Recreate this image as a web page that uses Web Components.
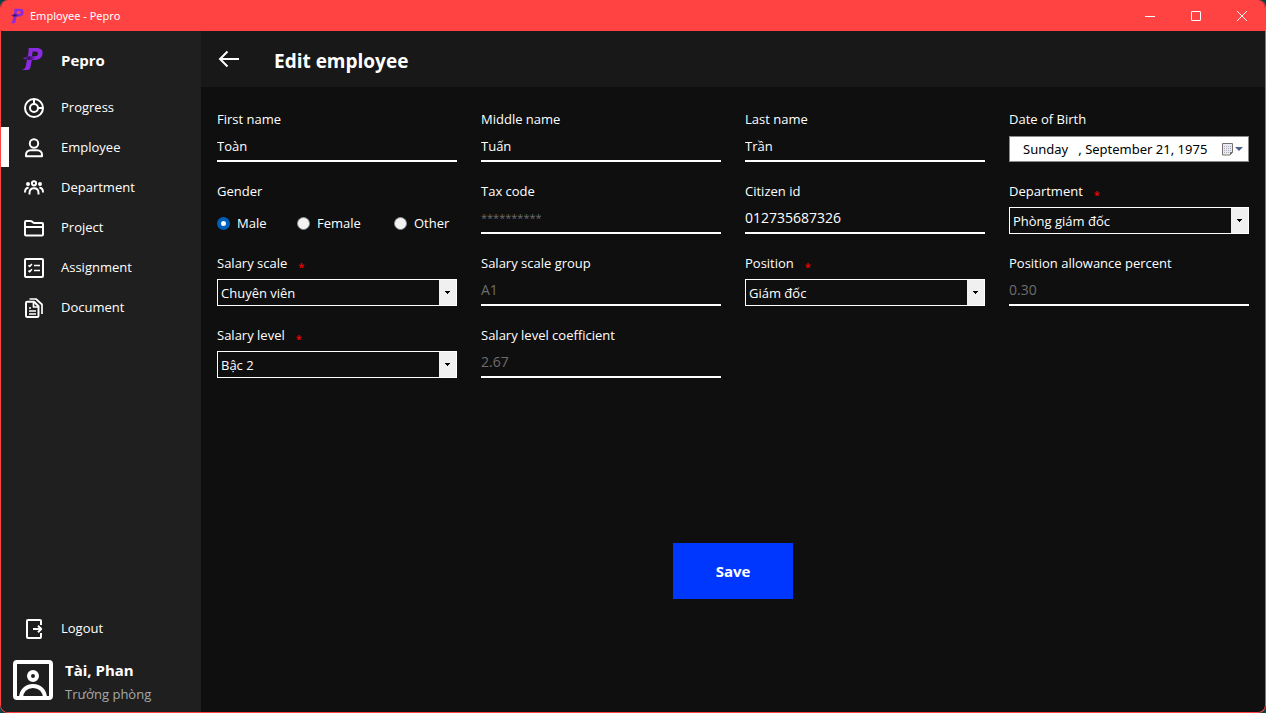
<!DOCTYPE html>
<html lang="en">
<head>
<meta charset="utf-8">
<title>Employee - Pepro</title>
<style>
  html, body { margin: 0; height: 100%; }
  body {
    background: #0b4349;
    color: #fff;
    font: 13px/20px "Open Sans", "Noto Sans", sans-serif;
  }
</style>
</head>
<body>
<app-window caption="Employee - Pepro">
  <side-bar slot="sidebar">
    <nav-item icon="progress">Progress</nav-item>
    <nav-item icon="employee" active>Employee</nav-item>
    <nav-item icon="department">Department</nav-item>
    <nav-item icon="project">Project</nav-item>
    <nav-item icon="assignment">Assignment</nav-item>
    <nav-item icon="document">Document</nav-item>
    <nav-item slot="bottom" icon="logout">Logout</nav-item>
    <user-card slot="bottom" name="Tài, Phan" role-name="Trưởng phòng"></user-card>
  </side-bar>
  <page-header>Edit employee</page-header>
  <employee-form>
    <text-field label="First name" value="Toàn"></text-field>
    <text-field label="Middle name" value="Tuấn"></text-field>
    <text-field label="Last name" value="Trần"></text-field>
    <date-field label="Date of Birth" value="Sunday   , September 21, 1975"></date-field>
    <radio-field label="Gender" options="Male,Female,Other" value="Male"></radio-field>
    <text-field label="Tax code" value="**********" kind="masked" disabled></text-field>
    <text-field label="Citizen id" value="012735687326" kind="number"></text-field>
    <select-field label="Department" value="Phòng giám đốc"></select-field>
    <select-field label="Salary scale" value="Chuyên viên"></select-field>
    <text-field label="Salary scale group" value="A1" kind="number" disabled></text-field>
    <select-field label="Position" value="Giám đốc"></select-field>
    <text-field label="Position allowance percent" value="0.30" kind="number" disabled></text-field>
    <select-field label="Salary level" value="Bậc 2"></select-field>
    <text-field label="Salary level coefficient" value="2.67" kind="number" disabled></text-field>
  </employee-form>
</app-window>

<script>
const ICONS = {
  progress: '<circle cx="12" cy="12" r="9"/><circle cx="12" cy="12" r="4"/><path d="M12 3v5M16 12h5"/>',
  employee: '<circle cx="12" cy="7.5" r="4.2"/><path d="M4 20.2v-1.4c0-2.8 2-4.6 4.6-4.6h6.8c2.6 0 4.6 1.8 4.6 4.6v1.4z"/>',
  department: '<circle cx="12" cy="7.3" r="2.1"/><circle cx="6" cy="8" r="1"/><circle cx="18" cy="8" r="1"/><path d="M7.5 18.5v-1.500c0-3 1.800-4.700 4.500-4.700s4.500 1.700 4.500 4.700v1.500M3 16.500c0-3 1-4.700 3.600-4.700M21 16.500c0-3-1-4.700-3.600-4.700"/>',
  project: '<path d="M3 18.5v-12.500c0-.6.4-1 1-1h4.500c.5 0 .8.1 1.200.4l1.800 1.300c.4.3.8.4 1.300.4h7.200c.6 0 1 .4 1 1v10.400c0 .6-.4 1-1 1h-16c-.6 0-1-.4-1-1zM3 11h18"/>',
  assignment: '<rect x="3" y="3" width="18" height="18" rx="1"/><path stroke-width="1.600" d="M6.500 9.300l1.200 1.200 2.200-2.600M6.500 14.600l1.200 1.200 2.200-2.600M12 9.500h6M12 14.500h6"/>',
  document: '<path d="M4 7c0-.8.5-1.300 1.300-1.300h6.700l4.500 4.500v9.500c0 .8-.5 1.300-1.300 1.300h-9.900c-.8 0-1.300-.5-1.300-1.300z"/><path stroke-width="1.700" d="M11.500 6v5h5M7 12h2M7 15h7M7 18h7M7.500 3h6.500l6 5.500v9.500"/>',
  logout: '<path d="M19 8v-4c0-.6-.4-1-1-1h-12c-.6 0-1 .4-1 1v16c0 .6.4 1 1 1h12c.6 0 1-.4 1-1v-4M11 12h8M16 8.800l3.200 3.200-3.200 3.200"/>'
};
const LOGO = `<svg viewBox="0 0 24 24" aria-hidden="true">
  <defs><linearGradient id="g" x1="0" x2="1" y1="0" y2="0"><stop offset="0" stop-color="#8a2be2"/><stop offset=".45" stop-color="#35105c"/><stop offset="1" stop-color="#8a2be2"/></linearGradient></defs>
  <path fill="#8a2be2" fill-rule="evenodd" d="M6.500 1h8c4.500 0 6.600 2.300 6 6-.6 3.700-3.300 5.900-7.400 5.900h-3.300l-1.300 7c-.5 2.400-1.700 3.100-4.200 3.100H0c2.400-.9 3.400-1.800 3.800-4l1.500-7.500 1.300-6.500zM10.800 4.600l-1 5h2.800c1.900 0 3-.8 3.300-2.500.3-1.700-.6-2.500-2.500-2.500z"/>
  <path fill="url(#g)" d="M1 11.800c2-1.700 4-2.500 6.500-2.500h6.500c-.5 2.200-2 3.600-4.500 3.600H6z"/></svg>`;

/* Base class: stamps the element's template into an open shadow root. */
class Base extends HTMLElement {
  connectedCallback() {
    if (this.shadowRoot) return;
    const t = document.createElement('template');
    t.innerHTML = '<style>*{box-sizing:border-box}' + this.css() + '</style>' + this.html();
    this.attachShadow({ mode: 'open' }).append(t.content.cloneNode(true));
  }
  attr(n) { return this.getAttribute(n) || ''; }
}

customElements.define('app-window', class extends Base {
  css() { return `
    :host { display: flex; flex-direction: column; box-sizing: border-box; min-height: 100vh;
      border: solid #ff4343; border-width: 0 1px 1px; border-radius: 8px; overflow: hidden; background: #0f0f0f; }
    header { display: flex; align-items: center; height: 31px; background: #ff4343; font: 11px/20px "Noto Sans", sans-serif; padding-left: 9px; flex: none; }
    header > svg { width: 16px; height: 16px; }
    span { flex: 1; padding-left: 4px; }
    button { all: unset; width: 46px; height: 31px; display: flex; align-items: center; justify-content: center; }
    button svg { width: 12px; height: 12px; fill: none; stroke: #fff; }
    .body { flex: 1; display: flex; }
    main { flex: 1; min-width: 0; display: flex; flex-direction: column; }`; }
  html() { return `
    <header>${LOGO}<span>${this.attr('caption')}</span>
      <button aria-label="Minimize"><svg viewBox="0 0 12 12"><path d="M1 6.500h10"/></svg></button>
      <button aria-label="Maximize"><svg viewBox="0 0 12 12"><rect x="1.500" y="1.500" width="9" height="9" rx=".5"/></svg></button>
      <button aria-label="Close"><svg viewBox="0 0 12 12"><path d="M1 1l10 10M11 1l-10 10"/></svg></button>
    </header>
    <div class="body"><slot name="sidebar"></slot><main><slot></slot></main></div>`; }
});

customElements.define('side-bar', class extends Base {
  css() { return `
    :host { display: flex; flex-direction: column; width: 200px; flex: none; background: #1f1f1f; }
    .brand { display: flex; align-items: center; height: 56px; padding: 2px 21px 0; gap: 15px; font-size: 15px; font-weight: 700; }
    .brand svg { width: 24px; height: 24px; margin-bottom: 2px; }
    nav { flex: 1; }`; }
  html() { return `<div class="brand">${LOGO}<span>Pepro</span></div><nav><slot></slot></nav><slot name="bottom"></slot>`; }
});

customElements.define('nav-item', class extends Base {
  css() { return `
    :host { display: block; }
    a { display: flex; align-items: center; height: 40px; padding-left: 21px; gap: 15px; color: inherit; text-decoration: none; }
    :host([active]) a { border-left: 8px solid #fff; padding-left: 13px; }
    svg { width: 24px; height: 24px; margin-top: 2px; fill: none; stroke: #fff; stroke-width: 2; stroke-linejoin: round; }`; }
  html() { return `<a href="#${this.attr('icon')}"><svg viewBox="0 0 24 24" aria-hidden="true">${ICONS[this.attr('icon')]}</svg><slot></slot></a>`; }
});

customElements.define('user-card', class extends Base {
  css() { return `
    :host { display: flex; align-items: center; height: 64px; padding: 0 12px; gap: 12px; box-sizing: border-box; }
    svg { width: 40px; height: 40px; fill: none; stroke: #fff; stroke-width: 4; }
    div { padding-top: 4px; }
    strong, span { display: block; line-height: 24px; }
    strong { font-size: 15px; }
    span { color: #a8a8a8; }`; }
  html() { return `<svg viewBox="0 0 40 40" aria-hidden="true"><rect x="2" y="2" width="36" height="36" rx="2"/><circle cx="20" cy="16" r="4"/><path d="M8 38c0-7 5-12 12-12s12 5 12 12"/></svg>
    <div><strong>${this.attr('name')}</strong><span>${this.attr('role-name')}</span></div>`; }
});

customElements.define('page-header', class extends Base {
  css() { return `
    :host { display: flex; align-items: center; height: 56px; padding: 0 16px; gap: 33px; background: #181818; }
    button { all: unset; display: flex; }
    svg { width: 24px; height: 24px; fill: none; stroke: #fff; stroke-width: 2; }
    h1 { margin: 0; font-size: 19px; line-height: 24px; padding-top: 3px; }`; }
  html() { return `<button aria-label="Back"><svg viewBox="0 0 24 24"><path d="M22 12h-19M10.500 4.500l-7.500 7.500 7.500 7.500"/></svg></button><h1><slot></slot></h1>`; }
});

customElements.define('employee-form', class extends Base {
  css() { return `
    :host { flex: 1; display: flex; flex-direction: column; }
    form { flex: 1; display: flex; flex-direction: column; }
    .fields { display: grid; grid-template-columns: repeat(4, minmax(0, 1fr)); grid-auto-rows: 56px; gap: 16px 24px; padding: 20px 16px 51px; }
    .actions { flex: 1; display: flex; align-items: center; justify-content: center; }
    button { width: 120px; height: 56px; border: 0; background: #0037ff; color: #fff; font: inherit; font-size: 15px; font-weight: 700; }`; }
  html() { return `<form><div class="fields"><slot></slot></div><div class="actions"><button type="button">Save</button></div></form>`; }
});

/* Shared look of a labelled field. */
class Field extends Base {
  css() { return `
    :host { display: flex; flex-direction: column; gap: 4px; }
    .label { display: flex; gap: 11px; line-height: 24px; height: 24px; }
    .label i { font-style: normal; font-weight: 600; color: #ff0000; font-size: 11px; padding-top: 4px; }
    input, select { font: inherit; color: inherit; margin: 0; min-width: 0; }
    .control { height: 27px; }` + this.fieldCss(); }
}

customElements.define('text-field', class extends Field {
  fieldCss() { return `
    input { width: 100%; background: none; border: 0; border-bottom: 2px solid #fff; padding: 0 0 4px; outline: 0; }
    :host([kind="number"]) input { font-size: 14px; }
    :host([kind="masked"]) input { font-size: 11px; }
    input:disabled { color: #6d6d6d; }`; }
  html() { return `<label class="label" for="c">${this.attr('label')}</label>
    <input class="control" id="c" value="${this.attr('value')}" ${this.hasAttribute('disabled') ? 'disabled' : ''}>`; }
});

customElements.define('select-field', class extends Field {
  fieldCss() { return `
    .control { display: grid; grid-template-columns: 1fr 17px; border: 1px solid #fff; }
    select { appearance: none; grid-area: 1 / 1 / 2 / 3; background: none; border: 0; padding: 0 20px 0 3px; outline: 0; }
    option { color: #000; }
    svg { grid-area: 1 / 2; width: 17px; height: 25px; background: #f0f0f0; pointer-events: none; }`; }
  html() { return `<label class="label" for="c">${this.attr('label')}<i>*</i></label>
    <div class="control"><select id="c"><option>${this.attr('value')}</option></select>
    <svg viewBox="0 0 17 25" aria-hidden="true"><path d="M6 11h5v1h-1v1h-1v1h-1v-1h-1v-1h-1z"/></svg></div>`; }
});

customElements.define('date-field', class extends Field {
  fieldCss() { return `
    .control { display: flex; align-items: center; background: #fff; color: #000; border: 1px solid #8a8a8a; height: 26px; margin-top: 1px; padding: 0 5px 0 13px; }
    input { flex: 1; border: 0; background: none; padding: 0; outline: 0; font-family: "Noto Sans", sans-serif; }
    button { all: unset; display: flex; }
    svg { width: 21px; height: 13px; }`; }
  html() { return `<label class="label" for="c">${this.attr('label')}</label>
    <div class="control"><input id="c" value="${this.attr('value')}">
    <button type="button" aria-label="Open calendar"><svg viewBox="0 0 21 13">
      <path fill="#e9eaf2" stroke="#77706c" d="M.5.5h10v9l-2.500 2.500h-7.500z"/><path stroke="#a9adbd" stroke-dasharray="1 1" d="M2 3.500h7M2 5.500h7M2 7.500h7M2 9.500h5"/>
      <path fill="#77706c" d="M8 12v-3h3z"/><path fill="#4a5f8c" d="M13 4h8l-4 4z"/></svg></button></div>`; }
});

customElements.define('radio-field', class extends Field {
  fieldCss() { return `
    .options { display: grid; grid-template-columns: 80px 97px auto; padding-top: 2px; }
    .options label { display: flex; align-items: center; gap: 7px; height: 28px; }
    input { appearance: none; width: 13px; height: 13px; border-radius: 50%; background: #f3f3f3; border: 1px solid #8a8a8a; flex: none; }
    input:checked { background: #fff; border: 4px solid #005fb8; }`; }
  html() {
    const opts = this.attr('options').split(',').map(o =>
      `<label><input type="radio" name="r" ${o === this.attr('value') ? 'checked' : ''}>${o}</label>`).join('');
    return `<div class="label" id="l">${this.attr('label')}</div><div class="options" role="radiogroup" aria-labelledby="l">${opts}</div>`;
  }
});
</script>
</body>
</html>
